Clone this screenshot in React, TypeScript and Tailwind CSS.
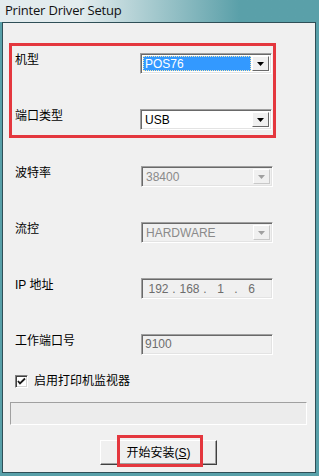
const cjk = "font-['Liberation_Sans','Noto_Sans_CJK_SC',sans-serif]"

function DropButton({ disabled }: { disabled?: boolean }) {
  return (
    <div
      className={`w-[17px] h-full flex items-center justify-center bg-[#f0f0f0] border border-t-white border-l-white ${
        disabled ? 'border-r-[#c8c8c8] border-b-[#c8c8c8]' : 'border-r-[#696969] border-b-[#696969]'
      }`}
    >
      <svg width="7" height="4" viewBox="0 0 7 4">
        <polygon points="0,0 7,0 3.5,4" fill={disabled ? '#a0a0a0' : '#000'} />
      </svg>
    </div>
  )
}

function Sunken({ children, disabled, w = 'w-[132px]' }: { children: React.ReactNode; disabled?: boolean; w?: string }) {
  return (
    <div
      className={`${w} h-[21px] border border-t-[#a0a0a0] border-l-[#a0a0a0] border-r-white border-b-white shadow-[inset_1px_1px_0_#696969,inset_-1px_-1px_0_#e3e3e3] p-[2px] flex ${
        disabled ? 'bg-[#f0f0f0]' : 'bg-white'
      }`}
    >
      {children}
    </div>
  )
}

function Combo({ value, selected, disabled }: { value: string; selected?: boolean; disabled?: boolean }) {
  return (
    <Sunken disabled={disabled}>
      <div className="flex-1 flex items-center pr-[1px]">
        {selected ? (
          <div className="flex-1 h-full bg-[#3399ff] outline-1 outline-dotted outline-[#f5e7b0] -outline-offset-1 flex items-center pl-[2px] text-white text-[12px]">
            {value}
          </div>
        ) : (
          <span className={`pl-[2px] text-[12px] ${disabled ? 'text-[#8a8a8a]' : 'text-black'}`}>{value}</span>
        )}
      </div>
      <DropButton disabled={disabled} />
    </Sunken>
  )
}

function Row({ label, children, lw = 'w-[126px]' }: { label: string; children: React.ReactNode; lw?: string }) {
  return (
    <div className="flex items-start">
      <div className={`${lw} text-[12px] leading-[15px] text-black`}>{label}</div>
      {children}
    </div>
  )
}

export default function App() {
  return (
    <div className={`w-[319px] h-[476px] bg-[#58a0a9] flex flex-col ${cjk}`}>
      {/* title bar */}
      <div className="h-[22px] shrink-0 flex items-center pl-[5px] bg-linear-to-r from-[#e3ecee] from-25% via-[#9fc6cb] via-50% to-[#5aa0a9] to-75%">
        <span className="text-[13px] text-[#111] font-['Open_Sans','Liberation_Sans',sans-serif] tracking-[-0.2px]">
          Printer Driver Setup
        </span>
      </div>

      {/* client area */}
      <div className="flex-1 ml-[2px] mr-[3px] mb-[3px] border border-[#2f4f57] bg-[#f0f0f0] flex flex-col">
        <div className="ml-[6px] mt-[20px] w-[267px] h-[95px] border-[3px] border-[#e4373e] pl-[3px] pt-[7px] flex flex-col">
          <Row label="机型" lw="w-[125px]">
            <Combo value="POS76" selected />
          </Row>
          <div className="mt-[35px]">
            <Row label="端口类型" lw="w-[125px]">
              <Combo value="USB" />
            </Row>
          </div>
        </div>

        <div className="pl-[12px] flex flex-col">
          <div className="mt-[28px]">
            <Row label="波特率">
              <Combo value="38400" disabled />
            </Row>
          </div>
          <div className="mt-[35px]">
            <Row label="流控">
              <Combo value="HARDWARE" disabled />
            </Row>
          </div>
          <div className="mt-[35px]">
            <Row label="IP 地址">
              <Sunken disabled>
                <div className="flex items-center w-full pl-[1px] text-[12px] text-[#6d6d6d]">
                  <span className="w-[27px] text-center">192</span>
                  <span className="w-[4px] text-center">.</span>
                  <span className="w-[27px] text-center">168</span>
                  <span className="w-[4px] text-center">.</span>
                  <span className="w-[27px] text-center">1</span>
                  <span className="w-[4px] text-center">.</span>
                  <span className="w-[27px] text-center">6</span>
                </div>
              </Sunken>
            </Row>
          </div>
          <div className="mt-[35px]">
            <Row label="工作端口号">
              <Sunken disabled>
                <span className="pl-[1px] text-[12px] text-[#6d6d6d] leading-[15px]">9100</span>
              </Sunken>
            </Row>
          </div>

          {/* checkbox */}
          <div className="mt-[19px] flex items-center gap-[6px]">
            <div className="w-[13px] h-[13px] border border-t-[#808080] border-l-[#808080] border-r-white border-b-white shadow-[inset_1px_1px_0_#404040,inset_-1px_-1px_0_#d4d4d4] bg-white flex items-center justify-center">
              <svg width="9" height="9" viewBox="0 0 9 9">
                <path d="M1 4 L3 6.5 L8 1.5" stroke="#1a1a1a" strokeWidth="1.8" fill="none" />
              </svg>
            </div>
            <span className="text-[12px] text-black leading-[15px]">启用打印机监视器</span>
          </div>
        </div>

        {/* progress */}
        <div className="ml-[7px] mt-[13px] w-[297px] h-[23px] border border-t-[#a0a0a0] border-l-[#a0a0a0] border-r-white border-b-white bg-[#ececec]" />

        {/* button */}
        <div className="ml-[97px] mt-[15px] relative w-[117px] h-[25px]">
          <button className="w-full h-full bg-[#f0f0f0] border border-t-white border-l-white border-r-[#404040] border-b-[#404040] shadow-[inset_-1px_-1px_0_#a0a0a0] text-[12px] text-black flex items-center justify-center">
            开始安装(<span className="underline">S</span>)
          </button>
          <div className="absolute left-[17px] -top-[5px] w-[86px] h-[32px] border-[3px] border-[#e4373e] pointer-events-none" />
        </div>
      </div>
    </div>
  )
}
